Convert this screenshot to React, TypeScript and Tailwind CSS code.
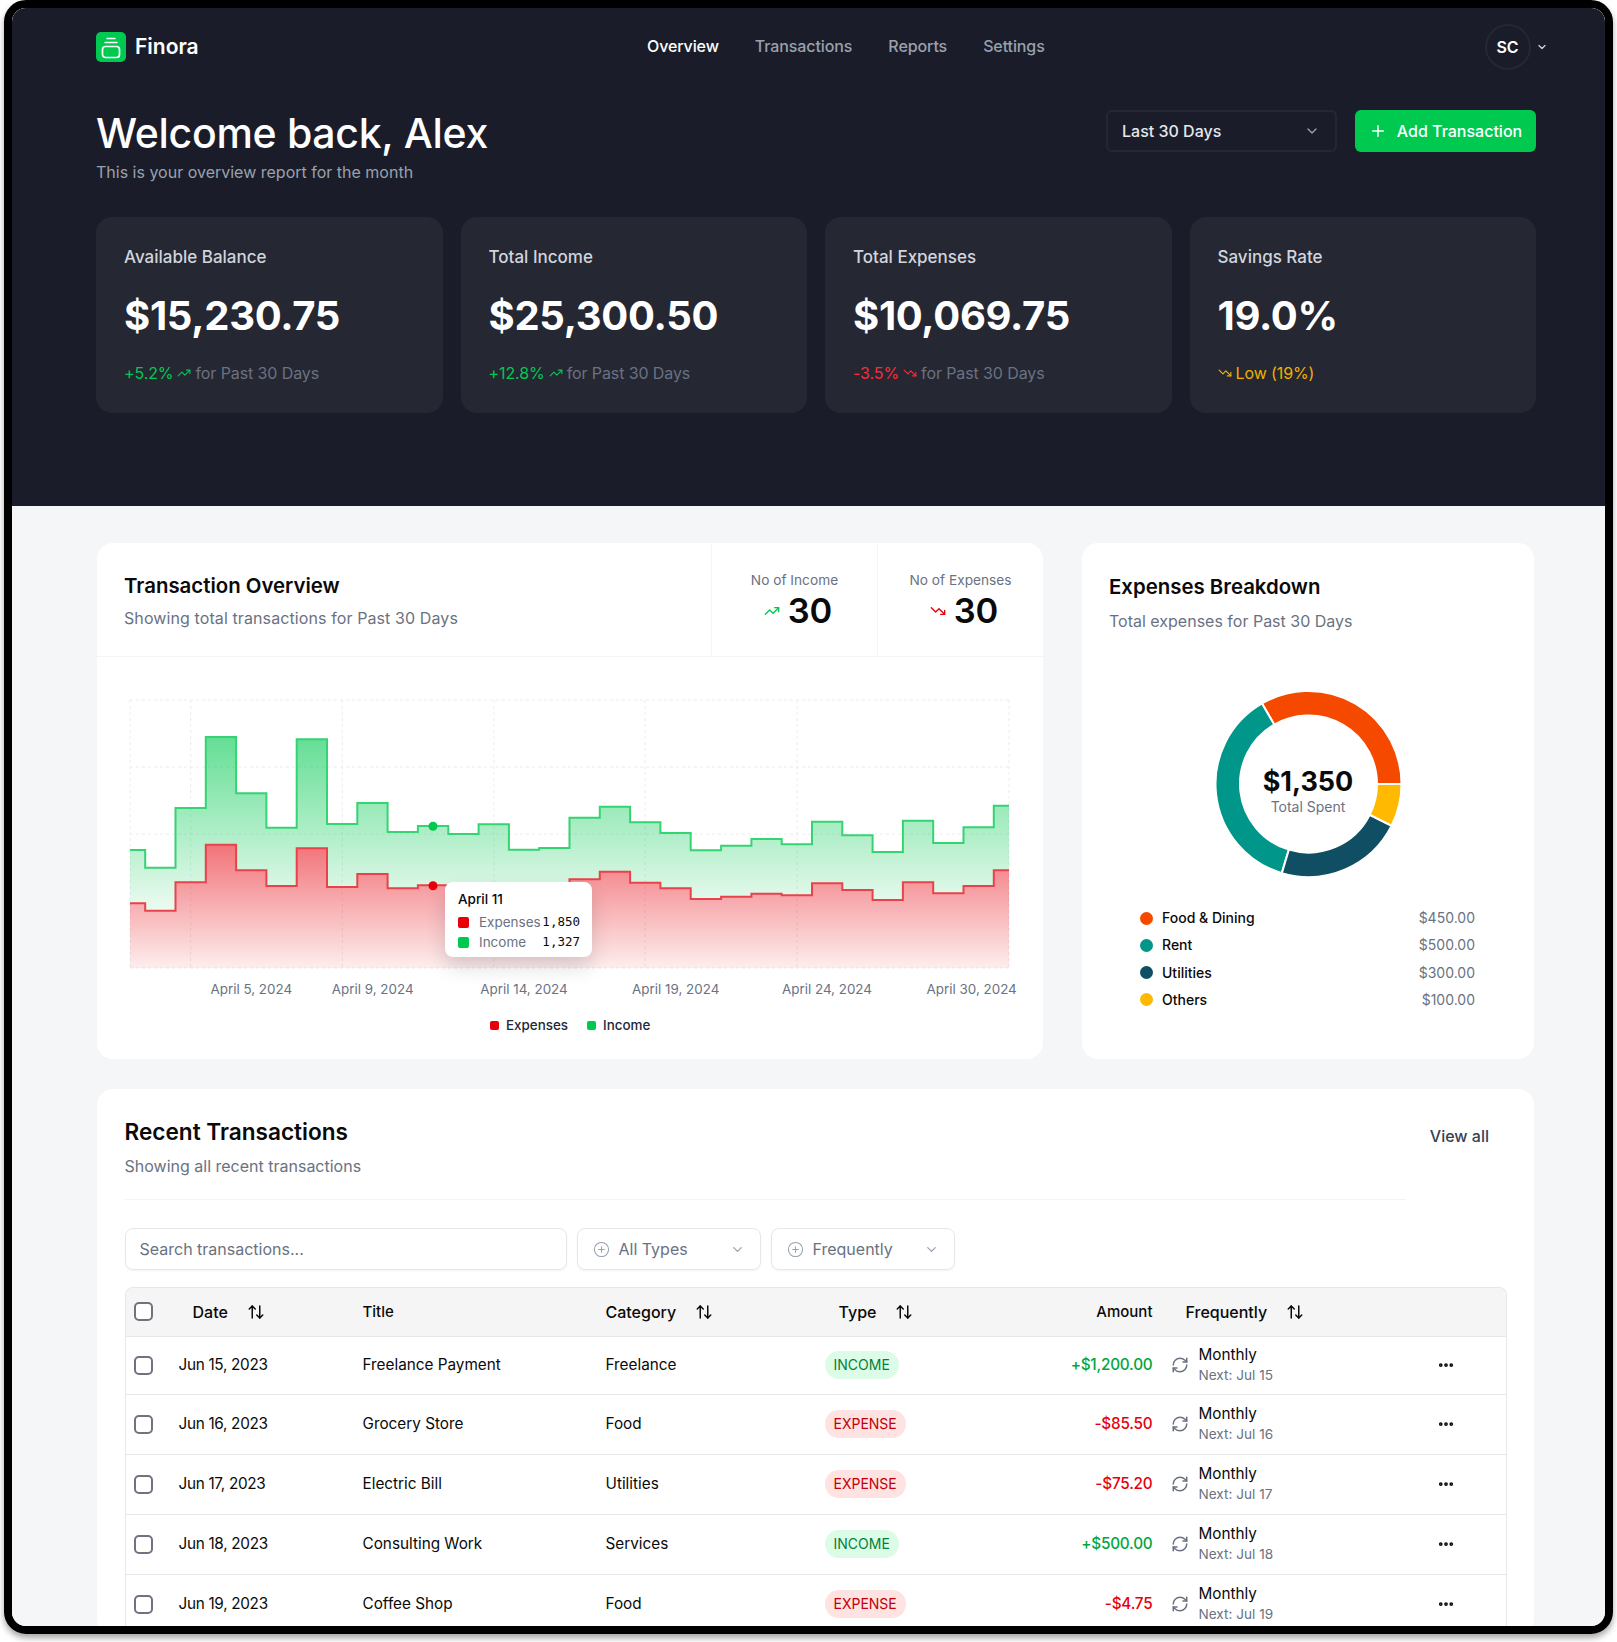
import { ArrowUpDown, ChevronDown, CirclePlus, Ellipsis, Plus, RefreshCw, TrendingDown, TrendingUp } from "lucide-react";

const font = { fontFamily: "Inter, 'Noto Sans', sans-serif" };

const income = [850, 867.7, 808, 737, 793.3, 827.7, 739.3, 824, 803, 832, 826, 834, 824.3, 849.7, 848, 817.7, 806.7, 822.3, 833, 850.3, 845.7, 839, 844.3, 821.7, 835.3, 852, 820.7, 843, 827.3, 805.7];
const expenses = [903.3, 910.7, 882.3, 844.7, 870.3, 886, 848.3, 887, 874, 888.3, 885.3, 887, 886, 886, 886, 879.3, 871.7, 882.7, 888.3, 899, 896.7, 893.7, 895.3, 883.3, 890, 900, 882.3, 893.3, 886, 870.3];

const X0 = 130;
const X1 = 1009;
const STEP = (X1 - X0) / 29;
const OX = 96;
const OY = 672;

function stepLine(vals: number[]) {
  let d = `M${X0 - OX} ${vals[0] - OY}`;
  for (let i = 1; i < vals.length; i++) {
    const mx = X0 + STEP * (i - 0.5) - OX;
    d += `H${mx.toFixed(1)}V${(vals[i] - OY).toFixed(1)}`;
  }
  d += `H${X1 - OX}`;
  return d;
}
function stepArea(vals: number[]) {
  return `${stepLine(vals)}V${968 - OY}H${X0 - OX}Z`;
}
function stepBand(top: number[], bottom: number[]) {
  let d = `${stepLine(top)}V${(bottom[bottom.length - 1] - OY).toFixed(1)}`;
  for (let i = bottom.length - 1; i >= 1; i--) {
    const mx = X0 + STEP * (i - 0.5) - OX;
    d += `H${mx.toFixed(1)}V${(bottom[i - 1] - OY).toFixed(1)}`;
  }
  return `${d}H${X0 - OX}Z`;
}

function arc(cx: number, cy: number, R: number, r: number, a0: number, a1: number) {
  const p = (rad: number, a: number) => {
    const t = (a * Math.PI) / 180;
    return `${(cx + rad * Math.cos(t)).toFixed(2)} ${(cy - rad * Math.sin(t)).toFixed(2)}`;
  };
  const large = a1 - a0 > 180 ? 1 : 0;
  return `M${p(R, a0)}A${R} ${R} 0 ${large} 0 ${p(R, a1)}L${p(r, a1)}A${r} ${r} 0 ${large} 1 ${p(r, a0)}Z`;
}

function StatCard({ label, value, delta, deltaClass, icon, tail }: { label: string; value: string; delta?: string; deltaClass: string; icon: React.ReactNode; tail: string }) {
  return (
    <div className="h-[196px] rounded-2xl bg-[#252733] pl-[28px] pt-[29px]">
      <div className="text-[17px] leading-[22px] font-medium text-[#d1d5dc]">{label}</div>
      <div className="mt-[22px] text-[40px] leading-[52px] font-bold text-white tracking-[-0.3px]">{value}</div>
      <div className="mt-[20px] flex items-center gap-[4px] text-base leading-[22px] tracking-[-0.1px]">
        {delta && <span className={deltaClass}>{delta}</span>}
        {icon}
        <span className={delta ? "text-[#6a7282]" : deltaClass}>{tail}</span>
      </div>
    </div>
  );
}

const rows = [
  ["Jun 15, 2023", "Freelance Payment", "Freelance", "INCOME", "+$1,200.00", "Next: Jul 15"],
  ["Jun 16, 2023", "Grocery Store", "Food", "EXPENSE", "-$85.50", "Next: Jul 16"],
  ["Jun 17, 2023", "Electric Bill", "Utilities", "EXPENSE", "-$75.20", "Next: Jul 17"],
  ["Jun 18, 2023", "Consulting Work", "Services", "INCOME", "+$500.00", "Next: Jul 18"],
  ["Jun 19, 2023", "Coffee Shop", "Food", "EXPENSE", "-$4.75", "Next: Jul 19"],
];

function Check() {
  return <div className="h-[19px] w-[19px] rounded-[5px] border-2 border-[#717182] bg-white" />;
}

function Head({ children, sort, className }: { children: React.ReactNode; sort?: boolean; className?: string }) {
  return (
    <div className={`flex items-center gap-[19px] ${className ?? ""}`}>
      <span>{children}</span>
      {sort && <ArrowUpDown size={18} strokeWidth={2} className="text-[#0a0a0a]" />}
    </div>
  );
}

export default function App() {
  return (
    <div className="h-[1642px] w-[1617px] overflow-hidden bg-white text-[#0a0a0a]" style={font}>
      <div className="ml-[4px] h-[1634px] w-[1609px] overflow-hidden rounded-[22px] border-8 border-black shadow-[0_4px_6px_rgba(0,0,0,0.35)]">
        <div className="h-full overflow-hidden rounded-[10px] bg-[#f5f6f8]">
          {/* Dark header */}
          <div className="h-[498px] bg-[#1a1d29] pl-[84px] pr-[57px]">
            <div className="relative flex h-[61px] items-center justify-between pt-[16px]">
              <div className="flex items-center gap-[9px]">
                <div className="flex h-[30px] w-[30px] items-center justify-center rounded-[5px] bg-[#00c950]">
                  <svg width="30" height="30" viewBox="0 0 30 30" fill="none" stroke="white" strokeWidth="1.7">
                    <path d="M10.5 6.5H19.5" />
                    <path d="M8.5 10.5H21.5" />
                    <rect x="6.5" y="14.5" width="17" height="11" rx="3" />
                  </svg>
                </div>
                <span className="text-[21px] leading-7 font-semibold text-white">Finora</span>
              </div>
              <nav className="absolute left-[551px] top-[26px] flex gap-[36px] text-base leading-6 font-medium tracking-[-0.1px] text-[#99a1af]">
                <span className="text-white">Overview</span>
                <span>Transactions</span>
                <span>Reports</span>
                <span>Settings</span>
              </nav>
              <div className="flex items-center gap-[5.5px]">
                <div className="flex h-[46px] w-[46px] items-center justify-center rounded-full border-2 border-[#252733] text-base font-semibold text-white">SC</div>
                <ChevronDown size={12} strokeWidth={2.5} className="text-[#d1d5dc]" />
              </div>
            </div>

            <div className="mt-[40px] flex items-start justify-between pr-[12px]">
              <div>
                <h1 className="text-[41px] leading-[48px] font-medium text-white tracking-[-0.3px]">Welcome back, Alex</h1>
                <p className="mt-[3px] text-base leading-6 text-[#99a1af]">This is your overview report for the month</p>
              </div>
              <div className="mt-[1px] flex gap-[18px]">
                <div className="flex h-[42px] w-[231px] items-center justify-between rounded-md border-2 border-[#252733] pl-[14px] pr-[15px] text-base font-medium text-[#e5e7eb]">
                  <span>Last 30 Days</span>
                  <ChevronDown size={16} className="text-[#99a1af]" />
                </div>
                <button className="flex h-[42px] w-[181px] items-center justify-center gap-[10px] rounded-md bg-[#00c950] text-base font-medium text-white">
                  <Plus size={18} />
                  Add Transaction
                </button>
              </div>
            </div>

            <div className="mt-[33px] mr-[12px] grid grid-cols-4 gap-[18px]">
              <StatCard label="Available Balance" value="$15,230.75" delta="+5.2%" deltaClass="text-[#00c950]" icon={<TrendingUp size={14} className="text-[#00c950]" />} tail="for Past 30 Days" />
              <StatCard label="Total Income" value="$25,300.50" delta="+12.8%" deltaClass="text-[#00c950]" icon={<TrendingUp size={14} className="text-[#00c950]" />} tail="for Past 30 Days" />
              <StatCard label="Total Expenses" value="$10,069.75" delta="-3.5%" deltaClass="text-[#fb2c36]" icon={<TrendingDown size={14} className="text-[#fb2c36]" />} tail="for Past 30 Days" />
              <StatCard label="Savings Rate" value="19.0%" deltaClass="text-[#f0b100]" icon={<TrendingDown size={14} className="text-[#f0b100]" />} tail="Low (19%)" />
            </div>
          </div>

          {/* Light content */}
          <div className="pl-[85px] pr-[71px] pt-[37px]">
            <div className="flex gap-[39px]">
              <div className="h-[516px] w-[946px] shrink-0 rounded-2xl bg-white">
                <div className="flex h-[114px] border-b border-[#f3f4f6]">
                  <div className="flex-1 pl-[27px] pt-[27px]">
                    <div className="text-[20.4px] leading-[32px] font-semibold">Transaction Overview</div>
                    <div className="text-base leading-[32px] tracking-[0.1px] text-[#6a7282]">Showing total transactions for Past 30 Days</div>
                  </div>
                  <div className="flex w-[166px] flex-col items-center border-l border-[#f3f4f6] pt-[27px]">
                    <div className="text-[13.7px] leading-5 text-[#6a7282]">No of Income</div>
                    <div className="ml-[7px] flex h-[42px] items-center gap-[8px]">
                      <TrendingUp size={16} className="text-[#00c950]" />
                      <span className="text-[34.5px] font-semibold leading-10">30</span>
                    </div>
                  </div>
                  <div className="flex w-[166px] flex-col items-center border-l border-[#f3f4f6] pt-[27px]">
                    <div className="text-[13.7px] leading-5 text-[#6a7282]">No of Expenses</div>
                    <div className="ml-[7px] flex h-[42px] items-center gap-[8px]">
                      <TrendingDown size={16} className="text-[#e7000b]" />
                      <span className="text-[34.5px] font-semibold leading-10">30</span>
                    </div>
                  </div>
                </div>

                <div className="relative">
                  <svg width="946" height="345" viewBox="0 0 946 345" className="block">
                    <defs>
                      <linearGradient id="gi" gradientUnits="userSpaceOnUse" x1="0" y1={737 - OY} x2="0" y2={935 - OY}>
                        <stop offset="0" stopColor="#00c950" stopOpacity="0.61" />
                        <stop offset="1" stopColor="#00c950" stopOpacity="0" />
                      </linearGradient>
                      <linearGradient id="ge" x1="0" y1="0" x2="0" y2="1">
                        <stop offset="0" stopColor="#e7000b" stopOpacity="0.55" />
                        <stop offset="1" stopColor="#e7000b" stopOpacity="0.07" />
                      </linearGradient>
                    </defs>
                    <g transform="translate(-1 15)">
                      <g stroke="#e9ecef" strokeDasharray="3 3" fill="none">
                        {[700, 767, 834, 968].map((y) => (
                          <line key={y} x1={X0 - OX} x2={X1 - OX} y1={y - OY} y2={y - OY} />
                        ))}
                        {[130, 190.7, 342.3, 494, 645, 797, 1009].map((x) => (
                          <line key={x} x1={x - OX} x2={x - OX} y1={700 - OY} y2={968 - OY} />
                        ))}
                      </g>
                      <path d={stepBand(income, expenses)} fill="url(#gi)" />
                      <path d={stepLine(income)} fill="none" stroke="#35d473" strokeWidth="2" />
                      <path d={stepArea(expenses)} fill="url(#ge)" />
                      <path d={stepLine(expenses)} fill="none" stroke="#e8434b" strokeWidth="2" />
                      <circle cx={433 - OX} cy={826.3 - OY} r="4.5" fill="#00c950" />
                      <circle cx={433 - OX} cy={885.7 - OY} r="4.5" fill="#e7000b" />
                      <g fontSize="13.4" fill="#6a7282" textAnchor="middle">
                        <text x={251.3 - OX} y={994 - OY}>April 5, 2024</text>
                        <text x={372.7 - OX} y={994 - OY}>April 9, 2024</text>
                        <text x={524 - OX} y={994 - OY}>April 14, 2024</text>
                        <text x={675.7 - OX} y={994 - OY}>April 19, 2024</text>
                        <text x={827 - OX} y={994 - OY}>April 24, 2024</text>
                        <text x={971.7 - OX} y={994 - OY}>April 30, 2024</text>
                      </g>
                    </g>
                  </svg>
                  <div className="absolute left-[348px] top-[225px] w-[147px] rounded-lg bg-white pl-[13px] pr-[12px] pt-[7px] pb-[4px] text-[13.5px] shadow-[0_10px_20px_rgba(0,0,0,0.14)]">
                    <div className="font-medium leading-[20px]">April 11</div>
                    <div className="mt-[3px] flex h-[20px] items-center">
                      <span className="h-[11px] w-[11px] rounded-[2px] bg-[#e7000b]" />
                      <span className="ml-[10px] text-[#6a7282]">Expenses</span>
                      <span className="ml-auto font-['DejaVu_Sans_Mono',monospace] text-[12.5px]">1,850</span>
                    </div>
                    <div className="mt-[0.5px] flex h-[20px] items-center">
                      <span className="h-[11px] w-[11px] rounded-[2px] bg-[#00c950]" />
                      <span className="ml-[10px] text-[#6a7282]">Income</span>
                      <span className="ml-auto font-['DejaVu_Sans_Mono',monospace] text-[12.5px]">1,327</span>
                    </div>
                  </div>
                  <div className="absolute left-[393px] top-[358px] flex items-center gap-[19px] text-[13.4px] leading-5 font-medium text-[#1e2939]">
                    <div className="flex items-center gap-[7px]">
                      <span className="h-[9px] w-[9px] rounded-[2px] bg-[#e7000b]" />
                      Expenses
                    </div>
                    <div className="flex items-center gap-[7px]">
                      <span className="h-[9px] w-[9px] rounded-[2px] bg-[#00c950]" />
                      Income
                    </div>
                  </div>
                </div>
              </div>

              <div className="h-[516px] flex-1 rounded-2xl bg-white pl-[27px] pt-[28px]">
                <div className="text-[20.4px] leading-[32px] font-semibold">Expenses Breakdown</div>
                <div className="mt-[2px] text-base leading-[32px] text-[#6a7282]">Total expenses for Past 30 Days</div>
                <div className="relative ml-[-27px] mt-[47px] h-[200px]">
                  <svg width="452" height="200" viewBox="0 0 452 200" className="block">
                    <g stroke="white" strokeWidth="2">
                      <path d={arc(226.5, 100, 93, 68.5, 0, 120)} fill="#f54900" />
                      <path d={arc(226.5, 100, 93, 68.5, 120, 253.33)} fill="#009689" />
                      <path d={arc(226.5, 100, 93, 68.5, 253.33, 333.33)} fill="#104e64" />
                      <path d={arc(226.5, 100, 93, 68.5, 333.33, 360)} fill="#ffb900" />
                    </g>
                  </svg>
                  <div className="absolute left-0 right-0 top-[80px] text-center">
                    <div className="text-[27px] leading-[36px] font-bold">$1,350</div>
                    <div className="mt-[-3px] text-sm leading-5 text-[#6a7282]">Total Spent</div>
                  </div>
                </div>
                <div className="mt-[24px] ml-[31px] mr-[59px] flex flex-col gap-[7.3px] text-sm leading-5">
                  {[
                    ["Food & Dining", "$450.00", "bg-[#f54900]"],
                    ["Rent", "$500.00", "bg-[#009689]"],
                    ["Utilities", "$300.00", "bg-[#104e64]"],
                    ["Others", "$100.00", "bg-[#ffb900]"],
                  ].map(([l, v, c]) => (
                    <div key={l} className="flex items-center">
                      <span className={`h-[13px] w-[13px] rounded-full ${c}`} />
                      <span className="ml-[9px] font-medium">{l}</span>
                      <span className="ml-auto text-[#6a7282]">{v}</span>
                    </div>
                  ))}
                </div>
              </div>
            </div>

            <div className="mt-[30px] rounded-2xl bg-white pl-[27.5px] pr-[27px] pt-[27px]">
              <div className="flex justify-between pr-[18px]">
                <div>
                  <div className="text-[22.6px] leading-[32px] font-semibold">Recent Transactions</div>
                  <div className="mt-[6px] text-base leading-6 text-[#6a7282]">Showing all recent transactions</div>
                </div>
                <div className="mt-[8px] text-base font-medium leading-6 text-[#364153]">View all</div>
              </div>
              <div className="mt-[21px] mr-[101px] h-px bg-[#f3f4f6]" />
              <div className="mt-[28px] flex gap-[10px]">
                <div className="flex h-[42px] w-[442px] items-center rounded-lg border border-[#e5e7eb] pl-[14px] text-base text-[#6a7282] shadow-xs">Search transactions...</div>
                {["All Types", "Frequently"].map((t) => (
                  <div key={t} className="flex h-[42px] w-[184px] items-center rounded-lg border border-[#e5e7eb] pl-[15px] pr-[15px] text-base text-[#6a7282] shadow-xs">
                    <CirclePlus size={17} strokeWidth={1.5} className="text-[#99a1af]" />
                    <span className="ml-[9px]">{t}</span>
                    <ChevronDown size={15} className="ml-auto text-[#99a1af]" />
                  </div>
                ))}
              </div>

              <div className="mt-[17px] overflow-hidden rounded-t-lg border-x border-t border-[#e5e7eb]">
                <table className="w-full table-fixed border-collapse text-[15.3px]">
                  <colgroup>
                    <col className="w-[43px]" />
                    <col className="w-[194px]" />
                    <col className="w-[243px]" />
                    <col className="w-[219px]" />
                    <col className="w-[191px]" />
                    <col className="w-[150px]" />
                    <col className="w-[241px]" />
                    <col />
                  </colgroup>
                  <thead>
                    <tr className="h-[48px] border-b border-[#e5e7eb] bg-[#f5f5f5]">
                      <th className="pl-[8px]"><Check /></th>
                      <th className="pl-[24px] text-left text-base font-medium"><Head sort>Date</Head></th>
                      <th className="text-left text-[15px] font-medium">Title</th>
                      <th className="text-left text-base font-medium"><Head sort>Category</Head></th>
                      <th className="pl-[14px] text-left text-base font-medium"><Head sort>Type</Head></th>
                      <th className="pr-[13px] text-right text-[15px] font-medium">Amount</th>
                      <th className="pl-[20px] text-left text-base font-medium"><Head sort>Frequently</Head></th>
                      <th />
                    </tr>
                  </thead>
                  <tbody>
                    {rows.map((r, i) => (
                      <tr key={r[0]} className={`${i === 0 ? "h-[58px]" : "h-[60px]"} border-b border-[#e5e7eb]`}>
                        <td className="pl-[8px]"><Check /></td>
                        <td className="pl-[10px] tracking-[-0.3px]">{r[0]}</td>
                        <td>{r[1]}</td>
                        <td>{r[2]}</td>
                        <td>
                          {r[3] === "INCOME" ? (
                            <span className="inline-flex h-[28px] items-center rounded-full bg-[#dcfce7] px-[9px] text-sm text-[#008236]">INCOME</span>
                          ) : (
                            <span className="inline-flex h-[28px] items-center rounded-full bg-[#ffe2e2] px-[9px] text-sm text-[#c10007]">EXPENSE</span>
                          )}
                        </td>
                        <td className={`pr-[13px] text-right font-medium tracking-[-0.2px] ${r[4].startsWith("+") ? "text-[#00a63e]" : "text-[#e7000b]"}`}>{r[4]}</td>
                        <td className="pl-[5px]">
                          <div className="flex items-center gap-[10px]">
                            <RefreshCw size={18} strokeWidth={2} className="text-[#6a7282]" />
                            <div>
                              <div className="text-[15.3px] leading-[20px]">Monthly</div>
                              <div className="text-[13.6px] leading-[20px] text-[#6a7282]">{r[5]}</div>
                            </div>
                          </div>
                        </td>
                        <td className="pl-[30px]"><Ellipsis size={18} strokeWidth={3} /></td>
                      </tr>
                    ))}
                  </tbody>
                </table>
              </div>
            </div>
          </div>
        </div>
      </div>
    </div>
  );
}
